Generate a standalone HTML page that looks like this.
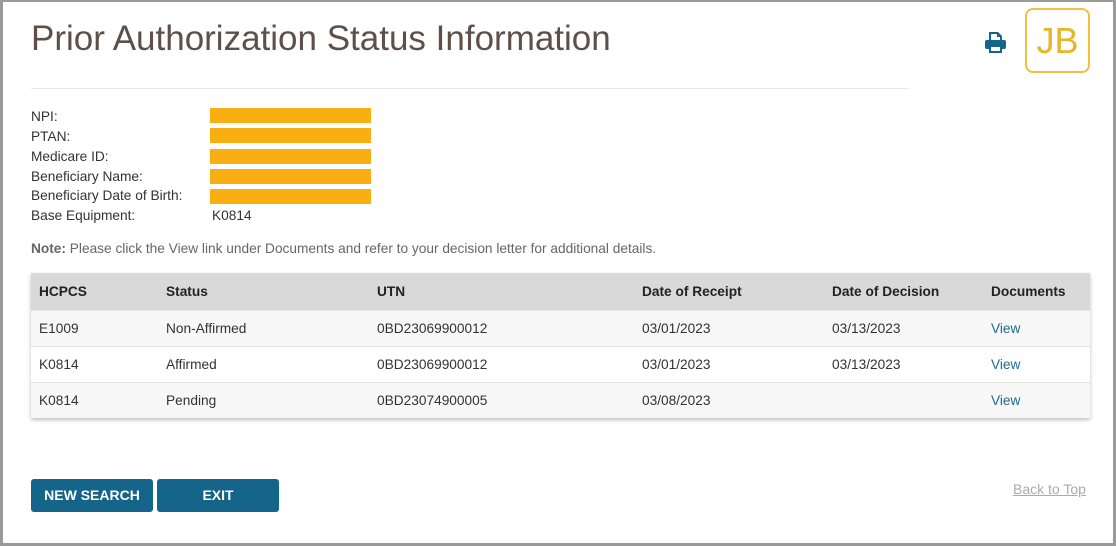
<!DOCTYPE html>
<html><head><style>
body{margin:0;width:1116px;height:547px;overflow:hidden;font-family:"Liberation Sans",Arial,sans-serif;background:#fff}
.frame{position:absolute;left:0;top:0;width:1110px;height:541px;border:3px solid #9a9a9a;border-top-width:2px;border-right-width:3px}
h1{position:absolute;left:31px;top:19px;margin:0;font-weight:normal;font-size:35px;color:#5e5048}
.hr{position:absolute;left:31px;top:88px;width:878px;height:1px;background:#e8e8e8}
.lbl{position:absolute;left:31px;font-size:13.7px;color:#333}
.bar{position:absolute;left:210px;width:161px;height:15px;background:#f9ae11}
.note{position:absolute;left:31px;top:241px;font-size:13.7px;color:#666}
table{position:absolute;left:31px;top:273px;width:1059px;border-collapse:collapse;font-size:13.7px;color:#333;box-shadow:0 2px 4px rgba(0,0,0,.25)}
th{background:#d9d9d9;text-align:left;font-weight:bold;height:37px;padding:0 8px;color:#222}
td{height:35px;padding:0 8px;border-top:1px solid #e4e4e4}
tr.a td{background:#f7f7f7}
a{color:#1e6b8a;text-decoration:none}
.btn{position:absolute;top:479px;height:33px;background:#15648a;color:#fff;font-weight:bold;font-size:14px;text-align:center;line-height:33px;border-radius:3px}
</style></head><body>
<div class="frame"></div>
<h1>Prior Authorization Status Information</h1>
<svg style="position:absolute;left:984px;top:31px" width="23" height="23" viewBox="0 0 23 23"><path d="M5 1h9l4 4v4H5z M7 3v6h9V6h-3V3z" fill="#15648a" fill-rule="evenodd"/><rect x="1" y="9" width="21" height="9" rx="2" fill="#15648a"/><rect x="5" y="14" width="13" height="8" fill="#15648a"/><rect x="7" y="16" width="9" height="4" fill="#fff"/></svg>
<div style="position:absolute;left:1025px;top:8px;width:61px;height:61px;border:2px solid #f0c040;border-radius:8px;color:#e7b526;font-size:36px;text-align:center;line-height:61px">JB</div>
<div class="hr"></div>
<div class="lbl" style="top:109px">NPI:</div>
<div class="lbl" style="top:129px">PTAN:</div>
<div class="lbl" style="top:149px">Medicare ID:</div>
<div class="lbl" style="top:169px">Beneficiary Name:</div>
<div class="lbl" style="top:188px">Beneficiary Date of Birth:</div>
<div class="lbl" style="top:208px">Base Equipment:</div>
<div class="bar" style="top:108px"></div>
<div class="bar" style="top:128px"></div>
<div class="bar" style="top:149px"></div>
<div class="bar" style="top:169px"></div>
<div class="bar" style="top:189px"></div>
<div class="lbl" style="top:208px;left:212px">K0814</div>
<div class="note"><b>Note:</b> Please click the View link under Documents and refer to your decision letter for additional details.</div>
<table>
<tr><th style="width:111px">HCPCS</th><th style="width:195px">Status</th><th style="width:249px">UTN</th><th style="width:174px">Date of Receipt</th><th style="width:143px">Date of Decision</th><th>Documents</th></tr>
<tr class="a"><td>E1009</td><td>Non-Affirmed</td><td>0BD23069900012</td><td>03/01/2023</td><td>03/13/2023</td><td><a>View</a></td></tr>
<tr><td>K0814</td><td>Affirmed</td><td>0BD23069900012</td><td>03/01/2023</td><td>03/13/2023</td><td><a>View</a></td></tr>
<tr class="a"><td>K0814</td><td>Pending</td><td>0BD23074900005</td><td>03/08/2023</td><td></td><td><a>View</a></td></tr>
</table>
<div class="btn" style="left:31px;width:122px">NEW SEARCH</div>
<div class="btn" style="left:157px;width:122px">EXIT</div>
<div style="position:absolute;left:1013px;top:481px;font-size:14px;color:#aaa;text-decoration:underline">Back to Top</div>
</body></html>
